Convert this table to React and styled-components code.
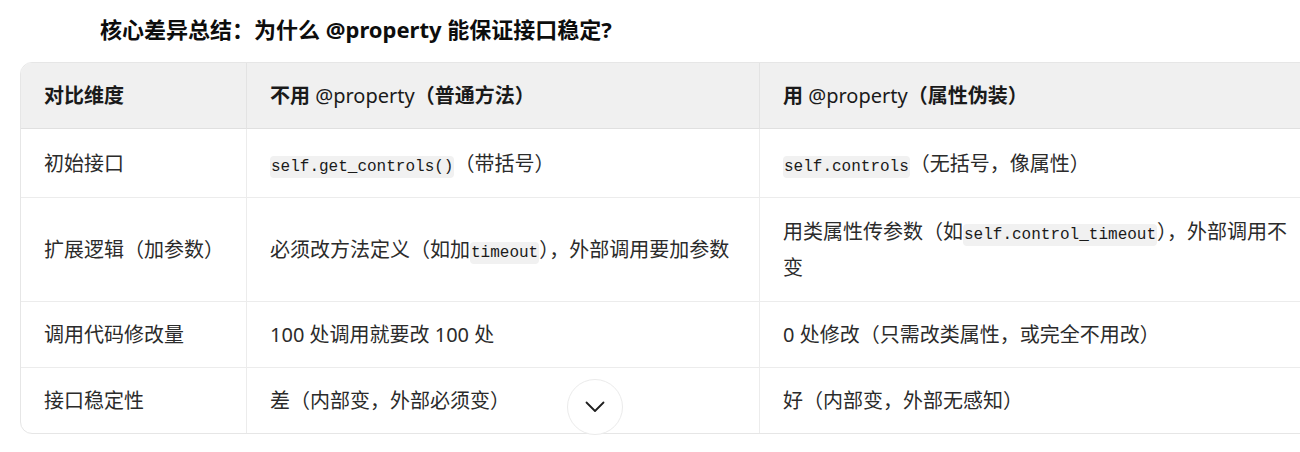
import React from 'react';
import styled, { createGlobalStyle } from 'styled-components';

const GlobalStyle = createGlobalStyle`
  html, body {
    margin: 0;
    padding: 0;
    background: #ffffff;
    overflow: hidden;
  }

  body {
    font-family: "Noto Sans", "Noto Sans CJK SC", sans-serif;
    color: #2b2b2b;
  }
`

const Section = styled.section`
  position: relative;
  width: 1300px;
  height: 452px;
`

const Heading = styled.h3`
  margin: 0;
  padding: 15px 0 0 100px;
  font-size: 22px;
  line-height: 28px;
  font-weight: 700;
  color: #0d0d0d;
`

const TableWrap = styled.div`
  margin: 19px 0 0 20px;
  width: 1300px;
  border: 1px solid #e6e6e6;
  border-radius: 12px;
  overflow: hidden;
`

const Table = styled.table`
  width: 100%;
  border-collapse: separate;
  border-spacing: 0;
  table-layout: fixed;
`

const Head = styled.th`
  background: #f0f0f0;
  text-align: left;
  font-size: 20px;
  font-weight: 700;
  line-height: 36px;
  padding: 15px 23px 14px;
  color: #1a1a1a;
  border-bottom: 1px solid #e0e0e0;
  border-right: ${(p) => (p.$last ? 'none' : '1px solid #e3e3e3')};
`

const Cell = styled.td`
  font-size: 20px;
  line-height: 36px;
  padding: ${(p) => p.$pad || '15px 23px 14px'};
  vertical-align: middle;
  border-top: ${(p) => (p.$first ? 'none' : '1px solid #ececec')};
  border-right: ${(p) => (p.$last ? 'none' : '1px solid #ececec')};
`

const Code = styled.code`
  font-family: "Liberation Mono", "DejaVu Sans Mono", monospace;
  font-size: 16px;
  line-height: 1;
  background: #f1f1f1;
  border-radius: 4px;
  padding: 2px 1px;
  color: #1a1a1a;
`

const ScrollButton = styled.button`
  position: absolute;
  left: 567px;
  top: 379px;
  width: 56px;
  height: 56px;
  border-radius: 50%;
  border: 1px solid #ebebeb;
  background: #ffffff;
  display: flex;
  align-items: center;
  justify-content: center;
  padding: 0;
  cursor: pointer;
`

const rows = [
  {
    dim: '初始接口',
    plain: <><Code>self.get_controls()</Code>（带括号）</>,
    prop: <><Code>self.controls</Code>（无括号，像属性）</>,
    pad: '17px 23px 15px',
  },
  {
    dim: '扩展逻辑（加参数）',
    plain: <>必须改方法定义（如加<Code>timeout</Code>），外部调用要加参数</>,
    prop: <>用类属性传参数（如<Code>self.control_timeout</Code>），外部调用不变</>,
    pad: '16px 23px 15px',
  },
  {
    dim: '调用代码修改量',
    plain: '100 处调用就要改 100 处',
    prop: '0 处修改（只需改类属性，或完全不用改）',
  },
  {
    dim: '接口稳定性',
    plain: '差（内部变，外部必须变）',
    prop: '好（内部变，外部无感知）',
  },
];

function App() {
  return (
    <Section>
      <GlobalStyle />
      <Heading>核心差异总结：为什么 @property 能保证接口稳定?</Heading>

      <TableWrap>
        <Table>
          <colgroup>
            <col style={{ width: 226 }} />
            <col style={{ width: 513 }} />
            <col />
          </colgroup>
          <thead>
            <tr>
              <Head>对比维度</Head>
              <Head>不用 <span style={{ fontWeight: 400 }}>@property</span>（普通方法）</Head>
              <Head $last>用 <span style={{ fontWeight: 400 }}>@property</span>（属性伪装）</Head>
            </tr>
          </thead>
          <tbody>
            {rows.map((row, i) => (
              <tr key={row.dim}>
                <Cell $first={i === 0} $pad={row.pad}>{row.dim}</Cell>
                <Cell $first={i === 0} $pad={row.pad}>{row.plain}</Cell>
                <Cell $first={i === 0} $pad={row.pad} $last>{row.prop}</Cell>
              </tr>
            ))}
          </tbody>
        </Table>
      </TableWrap>

      <ScrollButton type="button" aria-label="scroll down">
        <svg width="20" height="12" viewBox="0 0 20 12" fill="none">
          <polyline
            points="1.5,1.5 10,10 18.5,1.5"
            stroke="#1f1f1f"
            strokeWidth="1.8"
            strokeLinecap="round"
            strokeLinejoin="round"
          />
        </svg>
      </ScrollButton>
    </Section>
  );
}

export default App;
